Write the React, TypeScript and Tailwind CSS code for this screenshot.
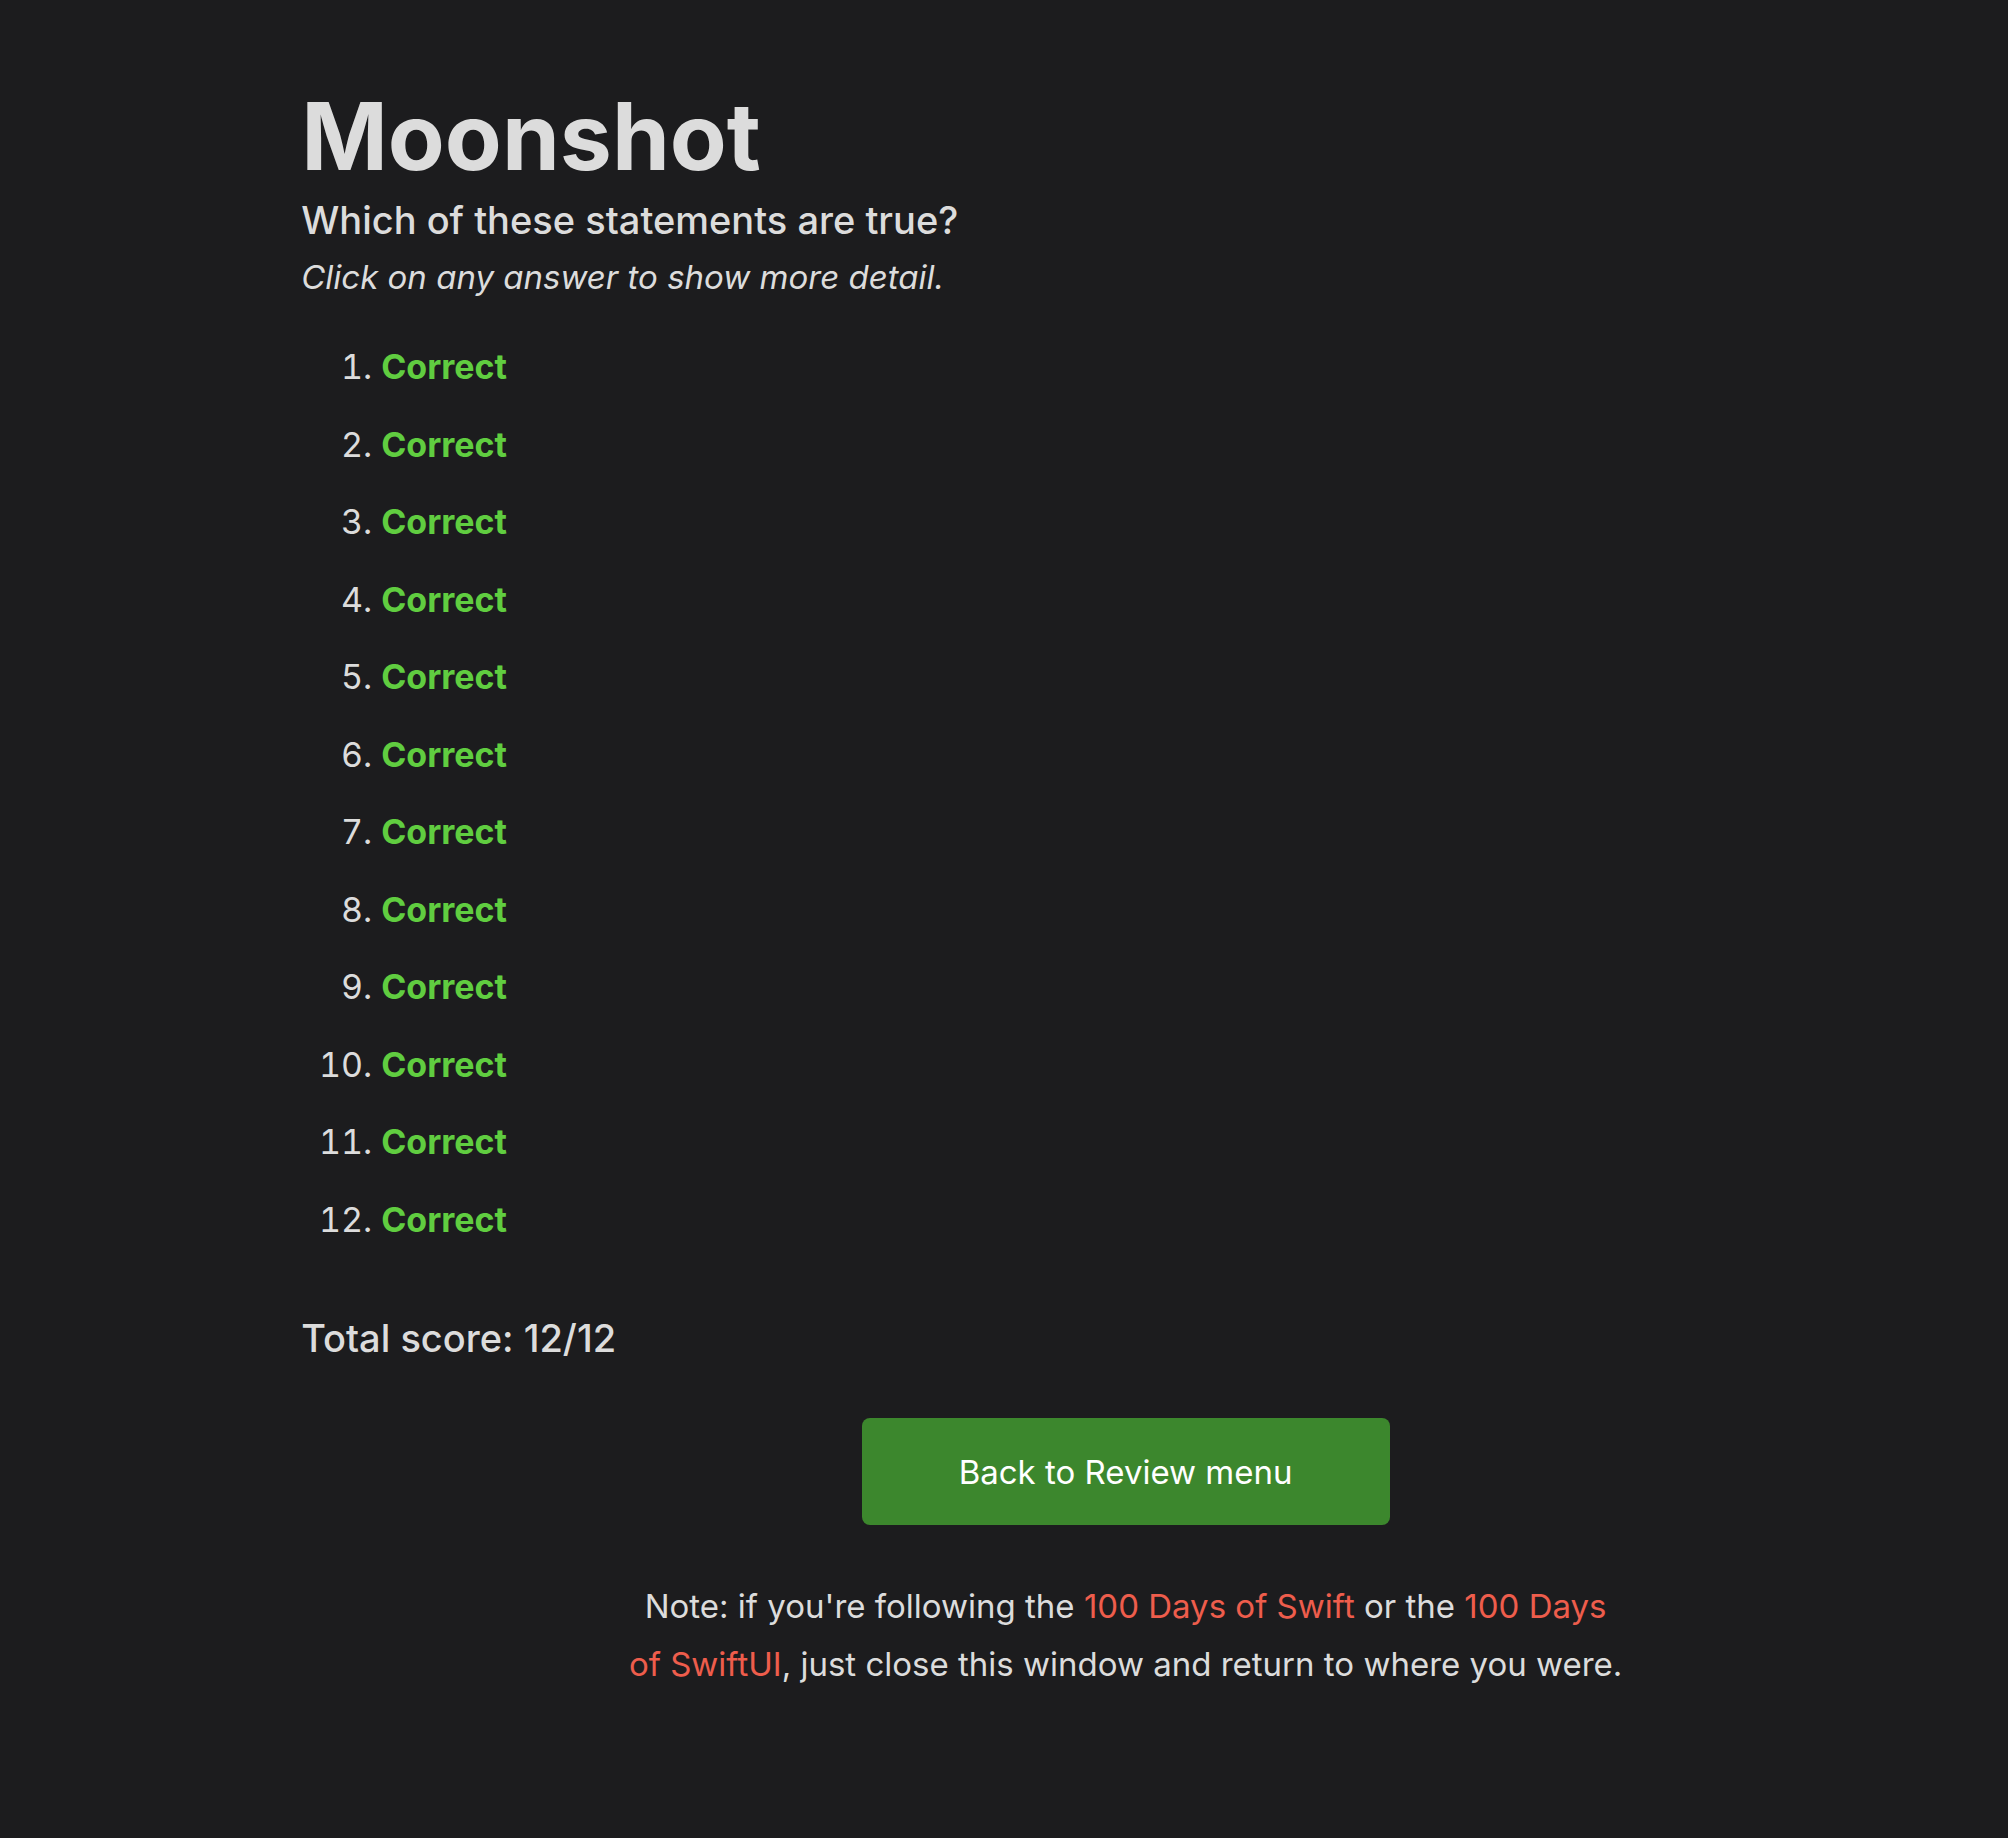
const answers = Array.from({ length: 12 }, (_, i) => i + 1);

export default function App() {
  return (
    <main className="min-h-screen bg-[#1c1c1e] pt-[88px] pr-[58px] pb-24 pl-[15%] font-['Inter',sans-serif] text-[33px] leading-[58px] text-[#dcdcdc]">
      <h1 className="text-[93px] leading-[96px] font-bold">Moonshot</h1>
      <h2 className="mt-2 text-[38px] leading-[56px] font-medium">Which of these statements are true?</h2>
      <p className="italic">Click on any answer to show more detail.</p>
      <ol className="mt-[31px] flex flex-col gap-[18px] text-[34px] leading-[1.75]">
        {answers.map((n) => (
          <li key={n} className="flex gap-[9px]">
            <span className="w-[71px] text-right tabular-nums">{n}.</span>
            <button type="button" className="font-bold text-[#60cd40]">Correct</button>
          </li>
        ))}
      </ol>
      <p className="mt-[60px] text-[38px] font-medium">Total score: 12/12</p>
      <div className="flex flex-col items-center">
        <a href="#review" className="mt-[51px] rounded-lg bg-[#3c872d] px-[97px] pt-[25px] pb-6 text-white">Back to Review menu</a>
        <p className="mt-[52px] max-w-[1000px] text-center">
          Note: if you're following the <a href="#swift" className="text-[#ee5d4c]">100 Days of Swift</a> or the{" "}
          <a href="#swiftui" className="text-[#ee5d4c]">100 Days of SwiftUI</a>, just close this window and return to where you were.
        </p>
      </div>
    </main>
  );
}
